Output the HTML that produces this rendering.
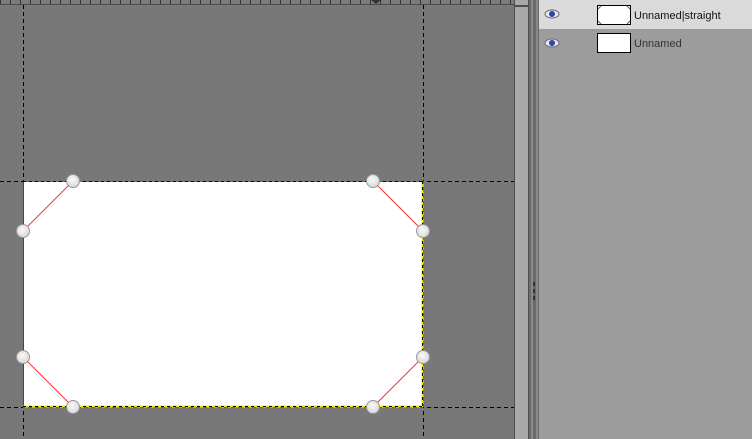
<!DOCTYPE html>
<html><head><meta charset="utf-8"><style>
html,body{margin:0;padding:0;width:752px;height:439px;overflow:hidden;background:#787878;font-family:"Liberation Sans",sans-serif}
</style></head><body>
<svg width="752" height="439" xmlns="http://www.w3.org/2000/svg" style="position:absolute;left:0;top:0">
<defs>
<pattern id="tk" width="10" height="5" patternUnits="userSpaceOnUse"><rect width="10" height="5" fill="#7c7c7c"/><rect x="0" y="0" width="1" height="4" fill="#333"/></pattern>
<radialGradient id="hg" cx="0.45" cy="0.4" r="0.6"><stop offset="0" stop-color="#fafafa"/><stop offset="1" stop-color="#d8d8d8"/></radialGradient>
</defs>
<rect x="0" y="0" width="514" height="439" fill="#787878"/>
<rect x="0" y="0" width="514" height="4" fill="url(#tk)"/>
<rect x="0" y="4" width="514" height="1" fill="#4a4a4a"/>
<path d="M371 0 L381 0 L376 4Z" fill="#333"/>
<!-- guides -->
<g stroke="#000" stroke-width="1" stroke-dasharray="4 3">
<line x1="23.5" y1="5" x2="23.5" y2="439"/>
<line x1="423.5" y1="5" x2="423.5" y2="439"/>
<line x1="0" y1="181.5" x2="514" y2="181.5"/>
<line x1="0" y1="407.5" x2="514" y2="407.5"/>
</g>
<rect x="23" y="181" width="400" height="226" fill="#fff"/>
<g stroke-width="1" fill="none">
<line x1="23" y1="181.5" x2="423" y2="181.5" stroke="#e33"/>
<line x1="23.5" y1="181" x2="23.5" y2="407" stroke="#33d"/>
<line x1="422.5" y1="181" x2="422.5" y2="407" stroke="#ee0" stroke-width="2"/>
<line x1="23" y1="406.5" x2="423" y2="406.5" stroke="#ee0" stroke-width="2"/>
</g>
<g stroke="#000" stroke-dasharray="3 3" stroke-width="1">
<line x1="23" y1="406.5" x2="423" y2="406.5"/>
<line x1="422.5" y1="181" x2="422.5" y2="407"/>
<line x1="23" y1="181.5" x2="423" y2="181.5"/>
</g>
<g stroke="#f33" stroke-width="1">
<line x1="73" y1="181" x2="23" y2="231"/>
<line x1="373" y1="181" x2="423" y2="231"/>
<line x1="23" y1="357" x2="73" y2="407"/>
<line x1="423" y1="357" x2="373" y2="407"/>
</g>
<g fill="url(#hg)" stroke="#999" stroke-width="1">
<circle cx="73" cy="181" r="6.5"/><circle cx="373" cy="181" r="6.5"/>
<circle cx="23" cy="231" r="6.5"/><circle cx="423" cy="231" r="6.5"/>
<circle cx="23" cy="357" r="6.5"/><circle cx="423" cy="357" r="6.5"/>
<circle cx="73" cy="407" r="6.5"/><circle cx="373" cy="407" r="6.5"/>
</g>
<!-- scrollbar -->
<rect x="514" y="0" width="15" height="439" fill="#4e4e4e"/>
<rect x="515" y="7" width="13" height="432" fill="#a9a9a9"/>
<rect x="515" y="0" width="13" height="5" fill="#a9a9a9"/>
<!-- divider -->
<rect x="529" y="0" width="10" height="439" fill="#6a6a6a"/>
<rect x="531" y="0" width="2" height="439" fill="#888"/>
<rect x="536" y="0" width="2" height="439" fill="#888"/>
<rect x="533" y="282" width="2" height="4" fill="#333"/>
<rect x="533" y="289" width="2" height="4" fill="#333"/>
<rect x="533" y="296" width="2" height="4" fill="#333"/>
<!-- panel -->
<rect x="539" y="0" width="213" height="439" fill="#9c9c9c"/>
<rect x="539" y="0" width="213" height="29" fill="#dadada"/>
<g>
<ellipse cx="552" cy="14" rx="7" ry="4" fill="#e8e8f0" stroke="#667" stroke-width="1"/>
<circle cx="552" cy="14" r="3" fill="#2a4a9a"/>
<ellipse cx="552" cy="43" rx="7" ry="4" fill="#e8e8f0" stroke="#667" stroke-width="1"/>
<circle cx="552" cy="43" r="3" fill="#2a4a9a"/>
</g>
<rect x="597.5" y="5.5" width="33" height="19" fill="#fff" stroke="#000"/>
<g stroke="#555" stroke-width="1"><line x1="598" y1="9" x2="601" y2="6"/><line x1="627" y1="6" x2="630" y2="9"/><line x1="598" y1="21" x2="601" y2="24"/><line x1="627" y1="24" x2="630" y2="21"/></g>
<rect x="597.5" y="33.5" width="33" height="19" fill="#fff" stroke="#000"/>
<text x="634" y="19" font-size="11" fill="#111" font-family="Liberation Sans, sans-serif">Unnamed|straight</text>
<text x="634" y="47" font-size="11" fill="#333" font-family="Liberation Sans, sans-serif">Unnamed</text>
</svg>
</body></html>
